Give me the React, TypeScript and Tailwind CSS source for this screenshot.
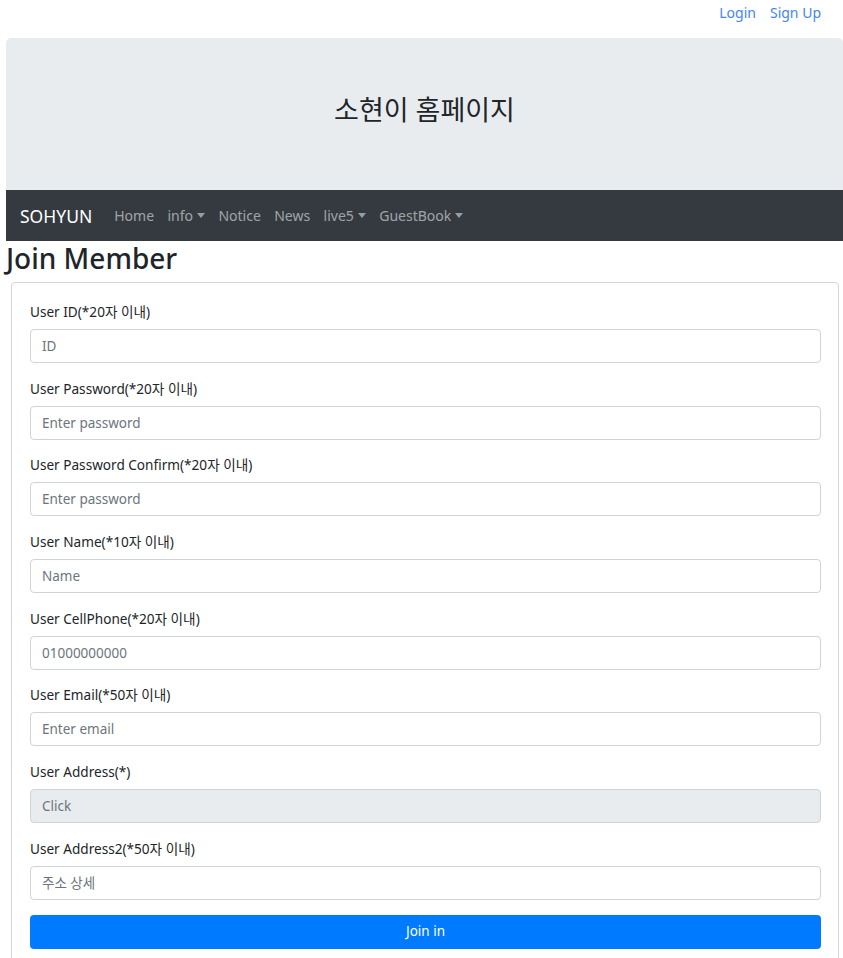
import React from "react";

const fields = [
  { label: "User ID(*20자 이내)", placeholder: "ID" },
  { label: "User Password(*20자 이내)", placeholder: "Enter password" },
  { label: "User Password Confirm(*20자 이내)", placeholder: "Enter password" },
  { label: "User Name(*10자 이내)", placeholder: "Name" },
  { label: "User CellPhone(*20자 이내)", placeholder: "01000000000" },
  { label: "User Email(*50자 이내)", placeholder: "Enter email" },
  { label: "User Address(*)", placeholder: "Click", readOnly: true },
  { label: "User Address2(*50자 이내)", placeholder: "주소 상세" },
];

const navLinks = [
  { label: "Home" },
  { label: "info", dropdown: true },
  { label: "Notice" },
  { label: "News" },
  { label: "live5", dropdown: true },
  { label: "GuestBook", dropdown: true },
];

function Caret() {
  return (
    <span className="ml-[4px] inline-block h-0 w-0 border-x-[4px] border-t-[5px] border-x-transparent border-t-[rgba(255,255,255,0.5)] align-middle" />
  );
}

export default function App() {
  return (
    <div
      className="min-h-screen bg-white text-[#212529]"
      style={{ fontFamily: '"Noto Sans", "Noto Sans CJK KR", sans-serif' }}
    >
      {/* 상단 로그인 링크 */}
      <div className="flex h-[38px] items-start justify-end gap-[14px] pr-[22px] pt-[3px] text-[14px] leading-5">
        <a href="#" className="text-[#4285f4]">Login</a>
        <a href="#" className="text-[#4285f4]">Sign Up</a>
      </div>

      <div className="ml-[6px]">
        {/* 점보트론 */}
        <div className="flex h-[152px] items-center justify-center rounded-t-[5px] bg-[#e9ecef] pb-[8px]">
          <h1 className="text-[27px] leading-8 text-[#212529]">소현이 홈페이지</h1>
        </div>

        {/* 네비게이션 */}
        <nav className="flex h-[51px] items-center bg-[#343a40] pl-[14px]">
          <span className="mr-[22px] text-[17.5px] leading-6 text-white">SOHYUN</span>
          <ul className="flex items-center gap-[13.4px] text-[14px] text-[rgba(255,255,255,0.55)]">
            {navLinks.map((link) => (
              <li key={link.label} className="flex items-center">
                {link.label}
                {link.dropdown && <Caret />}
              </li>
            ))}
          </ul>
        </nav>

        <h2 className="text-[28px] font-medium leading-[35px] text-[#212529]">Join Member</h2>

        {/* 회원가입 폼 */}
        <div className="ml-[5px] mr-[4px] mt-[6px] rounded-[4px] border border-[#d6d6d6] pb-[20px] pl-[18px] pr-[17px] pt-[19px]">
          {fields.map((f) => (
            <div key={f.label} className="mb-[15.7px]">
              <label className="mb-[7px] block text-[13.6px] leading-5 text-[#212529]">{f.label}</label>
              <input
                readOnly={f.readOnly}
                placeholder={f.placeholder}
                className={`block h-[34px] w-full rounded-[4px] border border-[#ced4da] px-[11px] text-[13.5px] text-[#495057] placeholder:text-[#6c757d] ${
                  f.readOnly ? "bg-[#e9ecef]" : "bg-white"
                }`}
              />
            </div>
          ))}
          <button className="-mt-px block h-[34px] w-full rounded-[4px] bg-[#007bff] text-[13.5px] text-white">
            Join in
          </button>
        </div>
      </div>
    </div>
  );
}
